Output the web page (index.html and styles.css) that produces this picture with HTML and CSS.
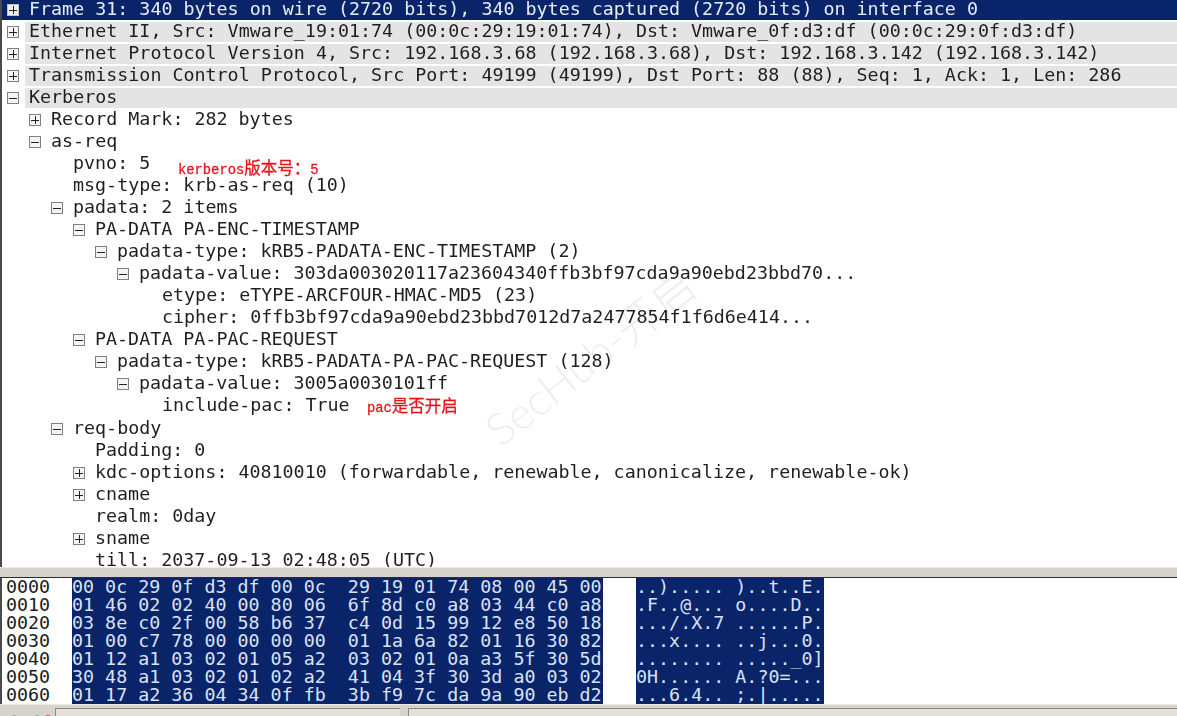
FILE: index.html
```html
<!DOCTYPE html>
<html lang="en">
<head>
<meta charset="utf-8">
<title>Kerberos AS-REQ</title>
<link rel="stylesheet" href="styles.css">
</head>
<body>
<div class="app">
  <section class="tree">
    <div class="row hdr sel"><span class="exp plus"></span><span class="txt">Frame 31: 340 bytes on wire (2720 bits), 340 bytes captured (2720 bits) on interface 0</span></div>
    <div class="row hdr"><span class="exp plus"></span><span class="txt">Ethernet II, Src: Vmware_19:01:74 (00:0c:29:19:01:74), Dst: Vmware_0f:d3:df (00:0c:29:0f:d3:df)</span></div>
    <div class="row hdr"><span class="exp plus"></span><span class="txt">Internet Protocol Version 4, Src: 192.168.3.68 (192.168.3.68), Dst: 192.168.3.142 (192.168.3.142)</span></div>
    <div class="row hdr"><span class="exp plus"></span><span class="txt">Transmission Control Protocol, Src Port: 49199 (49199), Dst Port: 88 (88), Seq: 1, Ack: 1, Len: 286</span></div>
    <div class="row hdr"><span class="exp minus"></span><span class="txt">Kerberos</span></div>
    <div class="row l1"><span class="exp plus"></span><span class="txt">Record Mark: 282 bytes</span></div>
    <div class="row l1"><span class="exp minus"></span><span class="txt">as-req</span></div>
    <div class="row l2"><span class="exp none"></span><span class="txt">pvno: 5</span></div>
    <div class="row l2"><span class="exp none"></span><span class="txt">msg-type: krb-as-req (10)</span></div>
    <div class="row l2"><span class="exp minus"></span><span class="txt">padata: 2 items</span></div>
    <div class="row l3"><span class="exp minus"></span><span class="txt">PA-DATA PA-ENC-TIMESTAMP</span></div>
    <div class="row l4"><span class="exp minus"></span><span class="txt">padata-type: kRB5-PADATA-ENC-TIMESTAMP (2)</span></div>
    <div class="row l5"><span class="exp minus"></span><span class="txt">padata-value: 303da003020117a23604340ffb3bf97cda9a90ebd23bbd70...</span></div>
    <div class="row l6"><span class="exp none"></span><span class="txt">etype: eTYPE-ARCFOUR-HMAC-MD5 (23)</span></div>
    <div class="row l6"><span class="exp none"></span><span class="txt">cipher: 0ffb3bf97cda9a90ebd23bbd7012d7a2477854f1f6d6e414...</span></div>
    <div class="row l3"><span class="exp minus"></span><span class="txt">PA-DATA PA-PAC-REQUEST</span></div>
    <div class="row l4"><span class="exp minus"></span><span class="txt">padata-type: kRB5-PADATA-PA-PAC-REQUEST (128)</span></div>
    <div class="row l5"><span class="exp minus"></span><span class="txt">padata-value: 3005a0030101ff</span></div>
    <div class="row l6 tail-gap"><span class="exp none"></span><span class="txt">include-pac: True</span></div>
    <div class="row l2"><span class="exp minus"></span><span class="txt">req-body</span></div>
    <div class="row l3"><span class="exp none"></span><span class="txt">Padding: 0</span></div>
    <div class="row l3"><span class="exp plus"></span><span class="txt">kdc-options: 40810010 (forwardable, renewable, canonicalize, renewable-ok)</span></div>
    <div class="row l3"><span class="exp plus"></span><span class="txt">cname</span></div>
    <div class="row l3"><span class="exp none"></span><span class="txt">realm: 0day</span></div>
    <div class="row l3"><span class="exp plus"></span><span class="txt">sname</span></div>
    <div class="row l3"><span class="exp none"></span><span class="txt">till: 2037-09-13 02:48:05 (UTC)</span></div>

    <div class="note note-ver">kerberos<span class="cjk">版本号：</span>5</div>
    <div class="note note-pac">pac<span class="cjk">是否开启</span></div>
    <div class="watermark">SecHub-开启</div>
  </section>

  <div class="splitter"></div>

  <section class="bytes">
<pre class="col off">0000
0010
0020
0030
0040
0050
0060</pre>
<pre class="col hex">00 0c 29 0f d3 df 00 0c  29 19 01 74 08 00 45 00
01 46 02 02 40 00 80 06  6f 8d c0 a8 03 44 c0 a8
03 8e c0 2f 00 58 b6 37  c4 0d 15 99 12 e8 50 18
01 00 c7 78 00 00 00 00  01 1a 6a 82 01 16 30 82
01 12 a1 03 02 01 05 a2  03 02 01 0a a3 5f 30 5d
30 48 a1 03 02 01 02 a2  41 04 3f 30 3d a0 03 02
01 17 a2 36 04 34 0f fb  3b f9 7c da 9a 90 eb d2</pre>
<pre class="col asc">..)..... )..t..E.
.F..@... o....D..
.../.X.7 ......P.
...x.... ..j...0.
........ ....._0]
0H...... A.?0=...
...6.4.. ;.|.....</pre>
  </section>

  <footer class="status">
    <svg class="status-icons" width="52" height="12" viewBox="0 0 52 12" aria-hidden="true">
      <circle cx="14" cy="11" r="5" fill="#c9c7bd" stroke="#66665f"/>
      <circle cx="37" cy="11" r="5" fill="#5fae4a" stroke="#3d7a30"/>
      <circle cx="43" cy="10" r="3" fill="#ecebe6"/>
      <circle cx="48" cy="8" r="3" fill="#d05050"/>
    </svg>
    <div class="panel panel-a"></div>
    <div class="panel panel-b"></div>
  </footer>
</div>
</body>
</html>
```

FILE: styles.css
```css
* { box-sizing: border-box; }

html, body {
  margin: 0;
  padding: 0;
  background: #fff;
}

.app {
  width: 1177px;
  height: 716px;
  display: flex;
  flex-direction: column;
  overflow: hidden;
  font-family: "DejaVu Sans Mono", "Liberation Mono", monospace;
  font-size: 18.34px;
  color: #1f1f1f;
  filter: blur(0.35px);
}

/* packet tree */
.tree {
  position: relative;
  height: 567px;
  flex: none;
  overflow: hidden;
  border-left: 2px solid #4a4a4a;
}

.row {
  display: flex;
  height: 20px;
  margin-bottom: 2px;
  white-space: pre;
  line-height: 18px;
}
.tail-gap { margin-bottom: 3px; }

.exp {
  flex: none;
  align-self: center;
  width: 12px;
  height: 12px;
  margin-right: 10px;
  border: 1px solid #808080;
  background-color: #f4f4f4;
  background-repeat: no-repeat;
}
.exp.none { visibility: hidden; }
.exp.minus {
  background-image: linear-gradient(#222, #222);
  background-size: 8px 1px;
  background-position: center;
}
.exp.plus {
  background-image: linear-gradient(#222, #222), linear-gradient(#222, #222);
  background-size: 8px 1px, 1px 8px;
  background-position: center, center;
}

.hdr { padding-left: 5px; }
.hdr .exp { margin-right: 6px; }
.hdr .txt {
  flex: 1;
  padding-left: 4px;
  background: #e4e4e4;
}
.hdr.sel { background: #0a246a; }
.hdr.sel .txt { background: #0a246a; color: #e6ecf8; }
.hdr.sel .exp { border-color: #c0c0c0; background-color: #efefef; }

.l1 { padding-left: 27px; }
.l2 { padding-left: 49px; }
.l3 { padding-left: 71px; }
.l4 { padding-left: 93px; }
.l5 { padding-left: 115px; }
.l6 { padding-left: 138px; }

/* annotations over the tree */
.note {
  position: absolute;
  color: #e8141c;
  font-family: "Liberation Mono", monospace;
  font-size: 13.8px;
  font-weight: 400;
  line-height: 14px;
  white-space: pre;
  -webkit-text-stroke: 0.3px #e8141c;
}
.note-ver { left: 176px; top: 160px; }
.note-pac { left: 365px; top: 398px; }
.cjk {
  font-family: "Noto Sans CJK SC", sans-serif;
  font-size: 16.5px;
  line-height: 14px;
}

.watermark {
  position: absolute;
  left: 458px;
  top: 332px;
  width: 260px;
  text-align: center;
  font-family: "Lato", "Noto Sans CJK SC", sans-serif;
  font-size: 44px;
  font-weight: 300;
  line-height: 50px;
  white-space: nowrap;
  color: rgba(0, 0, 0, 0.07);
  transform: rotate(-38deg);
  pointer-events: none;
}

/* splitter */
.splitter {
  flex: none;
  height: 11px;
  background: #d6d3cb;
  border-top: 1px solid #ecebe6;
  border-bottom: 1px solid #2c2c2c;
}

/* hex view */
.bytes {
  flex: none;
  height: 126px;
  display: flex;
  align-items: flex-start;
  border-left: 2px solid #4a4a4a;
  background: #fff;
}

.col {
  margin: 0;
  font: inherit;
  line-height: 18px;
  white-space: pre;
}
.off {
  width: 70px;
  padding-left: 4px;
  color: #1c1c1c;
}
.hex {
  width: 531px;
  background: #0a246a;
  color: #d9e2f4;
}
.asc {
  width: 188px;
  margin-left: 33px;
  background: #0a246a;
  color: #d9e2f4;
}

/* status bar */
.status {
  flex: 1;
  display: flex;
  background: #d6d3cb;
  border-top: 1px solid #ecebe6;
  padding-top: 3px;
  overflow: hidden;
}
.status-icons { flex: none; margin-top: 2px; }
.panel {
  background: #e2e0da;
  border-top: 1px solid #8a8a84;
  border-left: 1px solid #8a8a84;
}
.panel-a { width: 345px; margin-left: 3px; }
.panel-b { flex: 1; margin-left: 8px; }
```
